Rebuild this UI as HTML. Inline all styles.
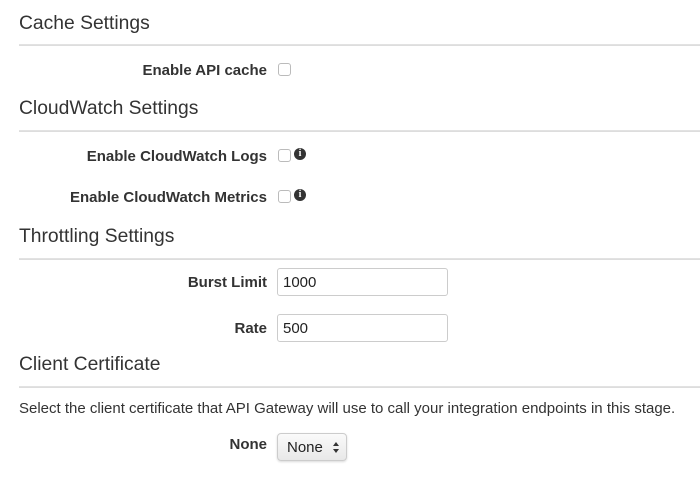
<!DOCTYPE html>
<html><head><style>
body{margin:0;width:700px;height:486px;background:#fff;font-family:"Liberation Sans",Arial,sans-serif;color:#333;position:relative;overflow:hidden}
.h{position:absolute;left:19px;font-size:19.3px;color:#333;line-height:22px}
.rule{position:absolute;left:19px;right:0;height:1px;background:#ddd;border-top:1px solid #e2e2e2}
.lab{position:absolute;right:433px;font-size:15px;font-weight:bold;color:#333;line-height:16px;white-space:nowrap}
.cb{position:absolute;left:278px;width:11px;height:11px;border:1px solid #bbb;border-radius:3px;background:#fff}
.info{position:absolute;left:294px;width:12px;height:12px;border-radius:50%;background:#333;color:#fff;font:bold 10px "Liberation Serif",serif;text-align:center;line-height:12px}
.inp{position:absolute;left:277px;height:26px;border:1px solid #ccc;border-radius:3px;font-size:15px;line-height:28px;padding-left:5px;width:164px;color:#222}
</style></head><body>
<div class="h" style="top:13px">Cache Settings</div>
<div class="rule" style="top:44px"></div>
<div class="lab" style="top:63px">Enable API cache</div>
<div class="cb" style="top:63px"></div>

<div class="h" style="top:98px">CloudWatch Settings</div>
<div class="rule" style="top:130px"></div>
<div class="lab" style="top:149px">Enable CloudWatch Logs</div>
<div class="cb" style="top:149px"></div>
<div class="info" style="top:148px">i</div>
<div class="lab" style="top:190px">Enable CloudWatch Metrics</div>
<div class="cb" style="top:190px"></div>
<div class="info" style="top:189px">i</div>

<div class="h" style="top:226px">Throttling Settings</div>
<div class="rule" style="top:258px"></div>
<div class="lab" style="top:275px">Burst Limit</div>
<div class="inp" style="top:268px">1000</div>
<div class="lab" style="top:321px">Rate</div>
<div class="inp" style="top:314px">500</div>

<div class="h" style="top:354px">Client Certificate</div>
<div class="rule" style="top:386px"></div>
<div style="position:absolute;left:19px;top:400px;font-size:15px;color:#333;white-space:nowrap">Select the client certificate that API Gateway will use to call your integration endpoints in this stage.</div>
<div class="lab" style="top:437px">None</div>
<div style="position:absolute;left:277px;top:433px;width:68px;height:26px;border:1px solid #ccc;border-radius:4px;background:linear-gradient(#fafafa,#e8e8e8);box-shadow:0 1px 2px rgba(0,0,0,.15);font-size:15px;line-height:28px;color:#222">
<span style="position:absolute;left:9px">None</span>
<span style="position:absolute;left:55px;top:8px;width:0;height:0;border-left:3px solid transparent;border-right:3px solid transparent;border-bottom:4px solid #333"></span>
<span style="position:absolute;left:55px;top:15px;width:0;height:0;border-left:3px solid transparent;border-right:3px solid transparent;border-top:4px solid #333"></span>
</div>
</body></html>
